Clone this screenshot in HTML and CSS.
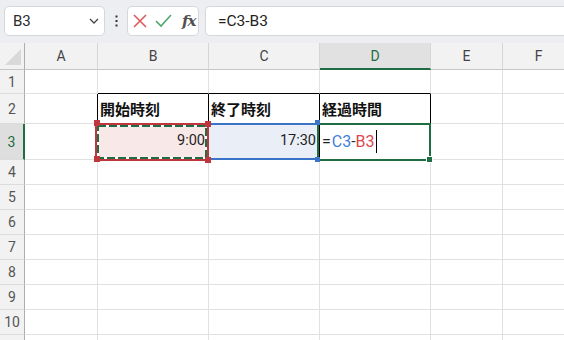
FILE: index.html
```html
<!DOCTYPE html>
<html lang="ja">
<head>
<meta charset="utf-8">
<title>Excel</title>
<link rel="stylesheet" href="styles.css">
</head>
<body>
<div class="toolbar">
  <div class="namebox">
    <span>B3</span>
    <svg class="chev" width="10" height="6" viewBox="0 0 10 6"><path d="M1 1 L5 5 L9 1" fill="none" stroke="#444" stroke-width="1.3"/></svg>
  </div>
  <div class="dots">
    <svg width="3" height="12" viewBox="0 0 3 12"><rect x="0.5" y="0.5" width="2" height="2" fill="#333"/><rect x="0.5" y="5" width="2" height="2" fill="#333"/><rect x="0.5" y="9.5" width="2" height="2" fill="#333"/></svg>
  </div>
  <div class="fxbox">
    <svg class="ic-x" width="14" height="14" viewBox="0 0 14 14"><path d="M1 1 L13 13 M13 1 L1 13" stroke="#e0585c" stroke-width="1.6" fill="none"/></svg>
    <svg class="ic-ok" width="17" height="14" viewBox="0 0 17 14"><path d="M1 7 L6 12 L16 1" stroke="#4fa86a" stroke-width="1.6" fill="none"/></svg>
    <span class="fx">fx</span>
  </div>
  <div class="formula">=C3-B3</div>
</div>

<div class="sheet">
  <div class="grid">
    <div class="corner"><svg width="24" height="26" viewBox="0 0 24 26"><polygon points="5,22 21,6 21,22" fill="#d9d9d9"/></svg></div>
    <div class="ch">A</div><div class="ch">B</div><div class="ch">C</div><div class="ch sel">D</div><div class="ch">E</div><div class="ch">F</div>

    <div class="rh">1</div><div class="c"></div><div class="c bb"></div><div class="c bb"></div><div class="c bb"></div><div class="c"></div><div class="c"></div>

    <div class="rh">2</div><div class="c br"></div><div class="c br bb hd">開始時刻</div><div class="c br bb hd">終了時刻</div><div class="c br bb hd">経過時間</div><div class="c"></div><div class="c"></div>

    <div class="rh sel">3</div><div class="c br"></div><div class="c br bb num pink">9:00</div><div class="c br bb num blue">17:30</div><div class="c br bb edit"><span class="eq">=</span><span class="refb">C3</span><span class="op">-</span><span class="refr">B3</span><span class="caret"></span></div><div class="c"></div><div class="c"></div>

    <div class="rh">4</div><div class="c"></div><div class="c"></div><div class="c"></div><div class="c"></div><div class="c"></div><div class="c"></div>
    <div class="rh">5</div><div class="c"></div><div class="c"></div><div class="c"></div><div class="c"></div><div class="c"></div><div class="c"></div>
    <div class="rh">6</div><div class="c"></div><div class="c"></div><div class="c"></div><div class="c"></div><div class="c"></div><div class="c"></div>
    <div class="rh">7</div><div class="c"></div><div class="c"></div><div class="c"></div><div class="c"></div><div class="c"></div><div class="c"></div>
    <div class="rh">8</div><div class="c"></div><div class="c"></div><div class="c"></div><div class="c"></div><div class="c"></div><div class="c"></div>
    <div class="rh">9</div><div class="c"></div><div class="c"></div><div class="c"></div><div class="c"></div><div class="c"></div><div class="c"></div>
    <div class="rh">10</div><div class="c"></div><div class="c"></div><div class="c"></div><div class="c"></div><div class="c"></div><div class="c"></div>
    <div class="rh"></div><div class="c"></div><div class="c"></div><div class="c"></div><div class="c"></div><div class="c"></div><div class="c"></div>
  </div>

  <div class="refc"></div>
  <div class="active"></div>
  <div class="ants">
    <svg width="114" height="38" viewBox="0 0 114 38">
      <rect x="1" y="1" width="112" height="36" fill="none" stroke="#c0363d" stroke-width="2"/>
      <rect x="3" y="3" width="108" height="32" fill="none" stroke="#ffffff" stroke-width="2"/>
      <rect x="3" y="3" width="108" height="32" fill="none" stroke="#1f6e43" stroke-width="2" stroke-dasharray="8 3"/>
    </svg>
  </div>
  <span class="hdl bl b1"></span>
  <span class="hdl bl b2"></span>
  <span class="hdl rd r1"></span>
  <span class="hdl rd r2"></span>
  <span class="hdl rd r3"></span>
  <span class="hdl rd r4"></span>
  <span class="fill"></span>
</div>
</body>
</html>
```

FILE: styles.css
```css
* { box-sizing: border-box; }

html, body {
  margin: 0;
  padding: 0;
}

body {
  width: 564px;
  height: 340px;
  overflow: hidden;
  background: #ffffff;
  font-family: Roboto, "Noto Sans", "Noto Sans CJK JP", sans-serif;
  color: #1f1f1f;
}

/* ---------- toolbar ---------- */
.toolbar {
  height: 43px;
  background: #eceef1;
  display: flex;
  align-items: flex-start;
  padding: 6px 0 0 4px;
}

.namebox {
  width: 101px;
  height: 30px;
  background: #fff;
  border: 1px solid #d5d7da;
  border-radius: 5px;
  display: flex;
  align-items: center;
  justify-content: space-between;
  padding: 0 5px 0 8px;
  font-size: 15px;
  color: #2b2b2b;
}

.dots {
  width: 22px;
  height: 30px;
  display: flex;
  align-items: center;
  justify-content: center;
}

.fxbox {
  width: 72px;
  height: 30px;
  background: #fff;
  border: 1px solid #d5d7da;
  border-radius: 5px;
  margin-right: 6px;
  display: flex;
  align-items: center;
  padding-left: 5px;
}

.ic-x { margin-right: 8px; }
.ic-ok { margin-right: 10px; }

.fx {
  font-family: "DejaVu Serif", "Liberation Serif", serif;
  font-style: italic;
  font-weight: bold;
  font-size: 15px;
  color: #505050;
  letter-spacing: -1px;
}

.formula {
  flex: 1;
  height: 30px;
  background: #fff;
  border: 1px solid #d5d7da;
  border-right: none;
  border-radius: 5px 0 0 5px;
  padding-left: 12px;
  display: flex;
  align-items: center;
  font-size: 15.5px;
  color: #222;
}

/* ---------- sheet ---------- */
.sheet {
  position: relative;
  height: 297px;
  overflow: hidden;
}

.grid {
  display: grid;
  grid-template-columns: 25px 73px 111px 111px 111px 72px 72px;
  grid-template-rows: 27px 24px 30px 36px repeat(8, 25px);
}

.corner {
  background: #f2f2f2;
  border-right: 1px solid #adadad;
  border-bottom: 1px solid #c6c6c6;
}
.corner svg { display: block; }

.ch {
  background: #f2f2f2;
  border-right: 1px solid #d6d6d6;
  border-bottom: 1px solid #c6c6c6;
  display: flex;
  align-items: center;
  justify-content: center;
  font-size: 14px;
  color: #444;
}

.ch.sel {
  background: #e1e1e1;
  border-bottom: 2px solid #1f6e43;
  color: #1f6e43;
}

.rh {
  background: #f2f2f2;
  border-right: 1px solid #adadad;
  border-bottom: 1px solid #dcdcdc;
  display: flex;
  align-items: center;
  justify-content: center;
  font-size: 14px;
  color: #555;
}

.rh.sel {
  background: #dedede;
  border-right: 2px solid #1f6e43;
  color: #1f6e43;
}

.c {
  border-right: 1px solid #e1e1e1;
  border-bottom: 1px solid #e1e1e1;
  display: flex;
  align-items: center;
  font-size: 14px;
  white-space: nowrap;
}

.c.br { border-right-color: #000; }
.c.bb { border-bottom-color: #000; }

.hd {
  font-family: "Noto Sans CJK JP", sans-serif;
  font-weight: bold;
  font-size: 15px;
  padding-left: 2px;
  color: #111;
}

.num {
  justify-content: flex-end;
  padding-right: 3px;
  padding-bottom: 2px;
  font-size: 14.5px;
}

.pink { background: #f9e8e8; }
.blue { background: #e9eef7; }

.edit {
  padding-left: 2px;
  font-size: 16px;
  color: #222;
}

.eq { margin-right: 1px; }
.refb { color: #3f7fdc; }
.refr { color: #e0464e; }
.op { color: #333; }

.caret {
  display: inline-block;
  width: 1px;
  height: 23px;
  background: #000;
  margin-left: 1px;
}

/* ---------- overlays ---------- */
.refc {
  position: absolute;
  left: 209px;
  top: 80px;
  width: 110px;
  height: 37px;
  border-top: 2px solid #3b73c8;
  border-bottom: 2px solid #3b73c8;
}

.active {
  position: absolute;
  left: 317px;
  top: 80px;
  width: 114px;
  height: 38px;
  border: 2px solid #1f6e43;
}

.ants {
  position: absolute;
  left: 95px;
  top: 80px;
  width: 114px;
  height: 38px;
}
.ants svg { display: block; }

.hdl {
  position: absolute;
  width: 6px;
  height: 6px;
}

.rd { background: #c0363d; }
.bl { background: #3b73c8; width: 5px; height: 5px; }

.r1 { left: 94px; top: 77px; }
.r2 { left: 94px; top: 113px; }
.r3 { left: 205px; top: 78px; }
.r4 { left: 205px; top: 114px; }
.b1 { left: 315px; top: 77px; }
.b2 { left: 315px; top: 114px; }

.fill {
  position: absolute;
  left: 426px;
  top: 113px;
  width: 7px;
  height: 7px;
  background: #1f6e43;
  border: 1px solid #fff;
}
```
